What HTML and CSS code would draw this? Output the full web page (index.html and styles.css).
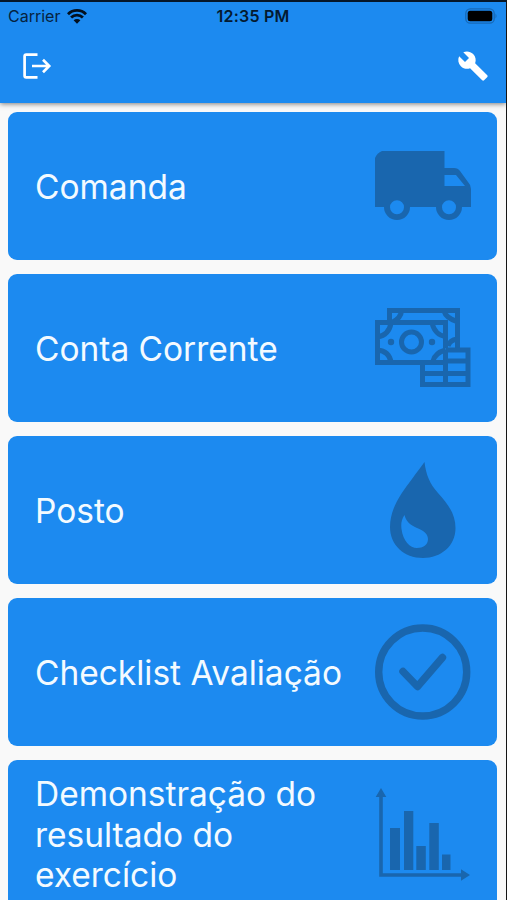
FILE: index.html
```
<!DOCTYPE html>
<html lang="pt">
	<head>
		<meta charset="utf-8">
		<title>Menu</title>
		<meta name="viewport" content="width=device-width, initial-scale=1">
		<link rel="stylesheet" href="styles.css">
	</head>

	<body>
	<div id="phone">
		<header id="top">
			<div class="status">
				<div class="carrier">
					<span>Carrier</span>
					<svg width="20" height="15" viewBox="0 0 20 15" fill="none" stroke="#03101e" stroke-width="2.8">
						<path d="M1 5.2a12.6 12.6 0 0 1 18 0M4.1 8.5a8.4 8.4 0 0 1 11.8 0"/>
						<path d="M10 14.7L6.6 11.3a4.9 4.9 0 0 1 6.8 0z" fill="#03101e" stroke="none"/>
					</svg>
				</div>
				<div class="time">12:35 PM</div>
				<div class="battery">
					<svg width="33" height="16" viewBox="0 0 33 16">
						<rect x=".8" y=".8" width="28.4" height="14.4" rx="4.5" fill="none" stroke="#1769b7" stroke-width="1.3"/>
						<rect x="2.7" y="2.7" width="24.6" height="10.6" rx="2.5" fill="#000"/>
						<path d="M30.5 5.5q2 2.5 0 5z" fill="#1769b7"/>
					</svg>
				</div>
			</div>
			<div class="toolbar">
				<!-- logout -->
				<svg width="30" height="28" viewBox="0 0 30 28" fill="none" stroke="#fff" stroke-width="2.7">
					<path d="M15.5 2.7H4.2Q2.6 2.7 2.6 4.3V23.7Q2.6 25.3 4.2 25.3H15.5M10 14H27M21 7.8L27.2 14L21 20.2"/>
				</svg>
				<!-- settings -->
				<svg width="32" height="32" viewBox="0 0 24 24" fill="#fff">
					<path d="M22.7 19l-9.1-9.1c.9-2.3.4-5-1.5-6.9-2-2-5-2.4-7.4-1.3L9 6 6 9 1.6 4.7C.4 7.1.9 10.1 2.9 12.1c1.9 1.9 4.6 2.4 6.9 1.5l9.1 9.1c.4.4 1 .4 1.4 0l2.3-2.3c.5-.4.5-1.1.1-1.4z"/>
				</svg>
			</div>
		</header>

		<div id="main">
			<div class="card">
				<p>Comanda</p>
				<svg class="icon" viewBox="0 0 96 96">
					<path fill-rule="evenodd" d="M7 13H69.500V30H79Q83 30 85 33L93 44Q96 47 96 51V69H87A13 13 0 0 1 61 69H35A13 13 0 0 1 9 69H0V20Q2 15 7 13zM69.500 37V48H90L81 37zM15 69.200a7 7 0 1 0 14 0a7 7 0 1 0-14 0M67 69.200a7 7 0 1 0 14 0a7 7 0 1 0-14 0"/>
				</svg>
			</div>
			<div class="card">
				<p>Conta Corrente</p>
				<svg class="icon line" viewBox="0 0 96 96">
					<path d="M14.500 21V10.500H82.500V49M26.500 11Q26 18 17 22.500M69 11Q71 18 82 21.500M82 39Q75 40 73 46"/>
					<path d="M70.500 48V22.500H2.500V62.500H47M2.500 37Q14 35 16 23M57 23Q60 35 70.500 36.500M2.500 50Q14 51 16 62M58 61Q60 53 70.500 50"/>
					<circle cx="36.500" cy="42" r="10"/>
					<path d="M70.500 50H93V84.500H47.500V62.500H70.500M70.500 50V84.500M70.500 61H93M47.500 73.500H93"/>
					<circle class="dot" cx="16" cy="42" r="3.200"/>
					<circle class="dot" cx="57" cy="42" r="3.200"/>
				</svg>
			</div>
			<div class="card">
				<p>Posto</p>
				<svg class="icon" viewBox="0 0 96 96">
					<path fill-rule="evenodd" d="M49.500 0C51 13 55 22 63 31C73 42 80.500 52 80.500 66C80.500 84 66 96 48 96C29 96 15 83 15 65C15 46 27 30 37 17C42 10 46 5 49.500 0zM29.500 53C26 58 26 63 26.500 67C28 79 35 86 42 86C48 86 53 83 53 77C53 71 47 68 42 66C35 63 31 59 29.500 53z"/>
				</svg>
			</div>
			<div class="card">
				<p>Checklist Avaliação</p>
				<svg class="icon check" viewBox="0 0 96 96">
					<circle cx="47.700" cy="48" r="44"/>
					<path d="M28 47.500L42.500 62.500L67.500 33.500"/>
				</svg>
			</div>
			<div class="card">
				<p>Demonstração do resultado do exercício</p>
				<svg class="icon" viewBox="0 0 96 96">
					<path d="M6 2L11.300 11H7.800V87.200H86V83.300L95 89L86 94.700V90.800H4.200V11H.7z"/>
					<path d="M15 42h10v42H15zM29 25h9.300v59H29zM41.300 60h9.500v24h-9.500zM54.300 37h9.500v47h-9.500zM67 68.500h8.500V84H67z"/>
				</svg>
			</div>
		</div>
	</div>
	</body>
</html>
```

FILE: styles.css
```
*{
	box-sizing: border-box;
}
body{
	margin: 0;
	font-family: Inter, "Liberation Sans", sans-serif;
}
#phone{
	height: 900px;
	overflow: hidden;
	background-color: #f9f9f9;
	border-top: 2px solid #05172a;
	border-right: 1px solid #151515;
}
#top{
	height: 101px;
	background-color: #1c8af0;
	box-shadow: 0 1px 5px rgba(0,0,0,0.5);
}
.status{
	display: grid;
	grid-template-columns: 1fr auto 1fr;
	align-items: center;
	height: 28px;
	padding: 0 8px 0 8px;
	color: #06233f;
	font-size: 16px;
}
.carrier{
	display: flex;
	align-items: center;
	gap: 7px;
}
.time{
	font-weight: 600;
	letter-spacing: 0.2px;
	color: #041a30;
}
.battery{
	display: flex;
	justify-content: flex-end;
}
.toolbar{
	display: flex;
	justify-content: space-between;
	align-items: center;
	height: 72px;
	padding: 0 17px 0 22px;
}
#main{
	display: flex;
	flex-direction: column;
	gap: 14px;
	padding: 9px 9px 0 8px;
}
.card{
	display: flex;
	flex: none;
	justify-content: space-between;
	align-items: center;
	height: 148px;
	padding: 0 26px 0 27px;
	border-radius: 9px;
	background-color: #1c8af0;
}
.card p{
	width: 320px;
	margin: 0;
	padding-top: 2px;
	color: #f3faff;
	font-size: 33.5px;
	line-height: 40.5px;
	letter-spacing: -0.02px;
}
.icon{
	flex: none;
	width: 96px;
	height: 96px;
	fill: #1966ae;
}
.line, .check{
	fill: none;
	stroke: #1966ae;
	stroke-width: 5;
}
.check{
	stroke-width: 7.4;
	stroke-linecap: round;
	stroke-linejoin: round;
}
.dot{
	fill: #1966ae;
	stroke: none;
}
```
